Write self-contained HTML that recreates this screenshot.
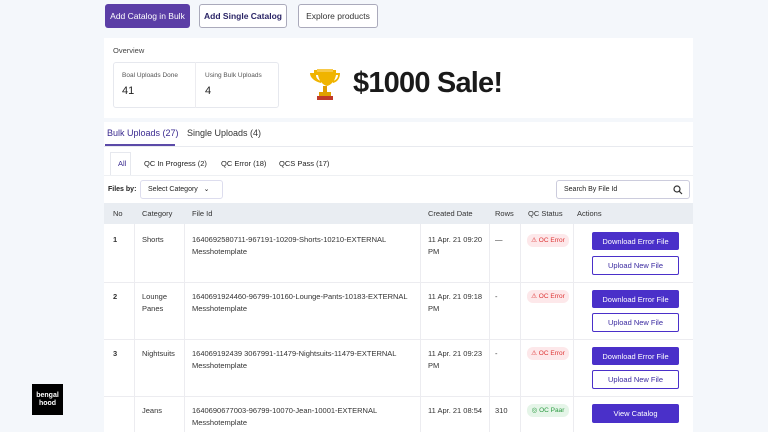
<!DOCTYPE html>
<html><head><meta charset="utf-8"><style>
*{box-sizing:border-box;margin:0;padding:0}
body{width:768px;height:432px;overflow:hidden;background:#f4f7fb;font-family:"Liberation Sans",sans-serif;color:#222;position:relative;font-size:8px}
.abs{position:absolute}
.btn{position:absolute;border-radius:3px;font-size:8.5px;display:flex;align-items:center;justify-content:center}
.panel{position:absolute;left:104px;width:589px;background:#fff}
.th{position:absolute;top:203px;height:21px;line-height:21px;font-size:7.5px;color:#333}
.cell{position:absolute;font-size:7.5px;line-height:12px;color:#333}
.vl{position:absolute;width:1px;background:#ececf0}
.dl{left:592px;width:87px;height:18px;background:#4a30c9;color:#fff;border-radius:2px;font-size:7.5px}
.up{left:592px;width:87px;height:19px;background:#fff;border:1px solid #4a30c9;color:#3a2aa0;border-radius:2px;font-size:7.5px}
.qe{position:absolute;left:527px;width:42px;height:13px;background:#fde8ea;color:#d33;border-radius:6px;font-size:6.5px;line-height:13px;text-align:center;white-space:nowrap}
</style></head><body>
<div class="btn" style="left:105px;top:4px;width:85px;height:24px;background:#5b3ea6;color:#fff">Add Catalog in Bulk</div>
<div class="btn" style="left:199px;top:4px;width:88px;height:24px;background:#fff;border:1px solid #aab;color:#2a2466;font-weight:bold">Add Single Catalog</div>
<div class="btn" style="left:298px;top:4px;width:80px;height:24px;background:#fff;border:1px solid #aab;color:#333">Explore products</div>

<div class="panel" style="top:38px;height:80px"></div>
<div class="abs" style="left:113px;top:46px;font-size:7.5px;color:#444">Overview</div>
<div class="abs" style="left:113px;top:62px;width:166px;height:46px;border:1px solid #e6e8ee;border-radius:3px;background:#fff"></div>
<div class="vl" style="left:195px;top:62px;height:46px"></div>
<div class="abs" style="left:122px;top:72px;font-size:6.5px;color:#555">Boal Uploads Done</div>
<div class="abs" style="left:122px;top:85px;font-size:11px">41</div>
<div class="abs" style="left:205px;top:72px;font-size:6.5px;color:#555">Using Bulk Uploads</div>
<div class="abs" style="left:205px;top:85px;font-size:11px">4</div>
<svg class="abs" style="left:309px;top:66px" width="32" height="36" viewBox="0 0 32 36">
<path d="M5 4h22v3h4c0 6-3 9-7 10l-0-2c3-1 5-3 5-6h-2c-1 6-5 10-9 11-4-1-8-5-9-11H7c0 3 2 5 5 6v2C8 16 1 13 1 7h4z" fill="#f0b400"/>
<rect x="8" y="3" width="16" height="3" fill="#f7c948"/>
<rect x="14" y="20" width="4" height="6" fill="#e09d00"/>
<rect x="10" y="26" width="12" height="4" fill="#e0a000"/>
<rect x="8" y="30" width="16" height="4" fill="#c0392b"/></svg>
<div class="abs" style="left:353px;top:67px;font-size:29px;font-weight:bold;color:#1a1a1a;letter-spacing:-0.8px">$1000 Sale!</div>

<div class="panel" style="top:122px;height:310px"></div>
<div class="abs" style="left:107px;top:128px;font-size:9px;color:#3a2a90">Bulk Uploads (27)</div>
<div class="abs" style="left:187px;top:128px;font-size:9px;color:#333">Single Uploads (4)</div>
<div class="abs" style="left:104px;top:146px;width:589px;height:1px;background:#e8eaef"></div>
<div class="abs" style="left:105px;top:144px;width:70px;height:2px;background:#5b4aa8"></div>
<div class="abs" style="left:110px;top:152px;width:21px;height:23px;border:1px solid #e6e8ee;border-bottom:none;background:#fff"></div>
<div class="abs" style="left:118px;top:159px;font-size:7.5px;color:#3a2a90">All</div>
<div class="abs" style="left:144px;top:159px;font-size:7.5px">QC In Progress (2)</div>
<div class="abs" style="left:221px;top:159px;font-size:7.5px">QC Error (18)</div>
<div class="abs" style="left:279px;top:159px;font-size:7.5px">QCS Pass (17)</div>
<div class="abs" style="left:104px;top:175px;width:589px;height:1px;background:#eef0f3"></div>
<div class="abs" style="left:108px;top:186px;font-size:7px;font-weight:bold">Files by:</div>
<div class="abs" style="left:140px;top:180px;width:83px;height:19px;border:1px solid #dde;border-radius:3px;font-size:7px;line-height:17px;padding-left:7px">Select Category &nbsp;&nbsp;⌄</div>
<div class="abs" style="left:556px;top:180px;width:134px;height:19px;border:1px solid #ccd;border-radius:3px;font-size:7px;line-height:17px;padding-left:7px">Search By File Id
<svg style="position:absolute;right:6px;top:4px" width="10" height="10" viewBox="0 0 10 10"><circle cx="4" cy="4" r="3" fill="none" stroke="#333" stroke-width="1.2"/><path d="M6.3 6.3L9 9" stroke="#333" stroke-width="1.2"/></svg></div>

<div class="abs" style="left:104px;top:203px;width:589px;height:21px;background:#e9edf2"></div>
<div class="th" style="left:113px">No</div>
<div class="th" style="left:142px">Category</div>
<div class="th" style="left:192px">File Id</div>
<div class="th" style="left:428px">Created Date</div>
<div class="th" style="left:495px">Rows</div>
<div class="th" style="left:528px">QC Status</div>
<div class="th" style="left:577px">Actions</div>
<div class="vl" style="left:134px;top:224px;height:208px"></div>
<div class="vl" style="left:184px;top:224px;height:208px"></div>
<div class="vl" style="left:420px;top:224px;height:208px"></div>
<div class="vl" style="left:489px;top:224px;height:208px"></div>
<div class="vl" style="left:520px;top:224px;height:208px"></div>
<div class="vl" style="left:573px;top:224px;height:208px"></div>
<div class="abs" style="left:104px;top:282px;width:589px;height:1px;background:#ececf0"></div>
<div class="abs" style="left:104px;top:339px;width:589px;height:1px;background:#ececf0"></div>
<div class="abs" style="left:104px;top:396px;width:589px;height:1px;background:#ececf0"></div>

<div class="cell" style="left:113px;top:234px;font-weight:bold">1</div>
<div class="cell" style="left:142px;top:234px">Shorts</div>
<div class="cell" style="left:192px;top:234px">1640692580711-967191-10209-Shorts-10210-EXTERNAL<br>Messhotemplate</div>
<div class="cell" style="left:428px;top:234px">11 Apr. 21 09:20<br>PM</div>
<div class="cell" style="left:495px;top:234px">—</div>
<div class="qe" style="top:234px">⚠ OC Error</div>
<div class="btn dl" style="top:232px">Download Error File</div>
<div class="btn up" style="top:256px">Upload New File</div>

<div class="cell" style="left:113px;top:291px;font-weight:bold">2</div>
<div class="cell" style="left:142px;top:291px">Lounge<br>Panes</div>
<div class="cell" style="left:192px;top:291px">1640691924460-96799-10160-Lounge-Pants-10183-EXTERNAL<br>Messhotemplate</div>
<div class="cell" style="left:428px;top:291px">11 Apr. 21 09:18<br>PM</div>
<div class="cell" style="left:495px;top:291px">-</div>
<div class="qe" style="top:290px">⚠ OC Error</div>
<div class="btn dl" style="top:290px">Download Error File</div>
<div class="btn up" style="top:313px">Upload New File</div>

<div class="cell" style="left:113px;top:348px;font-weight:bold">3</div>
<div class="cell" style="left:142px;top:348px">Nightsuits</div>
<div class="cell" style="left:192px;top:348px">164069192439 3067991-11479-Nightsuits-11479-EXTERNAL<br>Messhotemplate</div>
<div class="cell" style="left:428px;top:348px">11 Apr. 21 09:23<br>PM</div>
<div class="cell" style="left:495px;top:348px">-</div>
<div class="qe" style="top:347px">⚠ OC Error</div>
<div class="btn dl" style="top:347px">Download Error File</div>
<div class="btn up" style="top:370px">Upload New File</div>

<div class="cell" style="left:142px;top:405px">Jeans</div>
<div class="cell" style="left:192px;top:405px">1640690677003-96799-10070-Jean-10001-EXTERNAL<br>Messhotemplate</div>
<div class="cell" style="left:428px;top:405px">11 Apr. 21 08:54</div>
<div class="cell" style="left:495px;top:405px">310</div>
<div class="qe" style="top:404px;background:#e5f5e8;color:#2a9a40">◎ OC Paar</div>
<div class="btn dl" style="top:404px;height:19px">View Catalog</div>

<div class="abs" style="left:32px;top:384px;width:31px;height:31px;background:#000;color:#fff;font-size:7px;font-weight:bold;line-height:8px;text-align:center;padding-top:8px">bengal<br>hood</div>
</body></html>
